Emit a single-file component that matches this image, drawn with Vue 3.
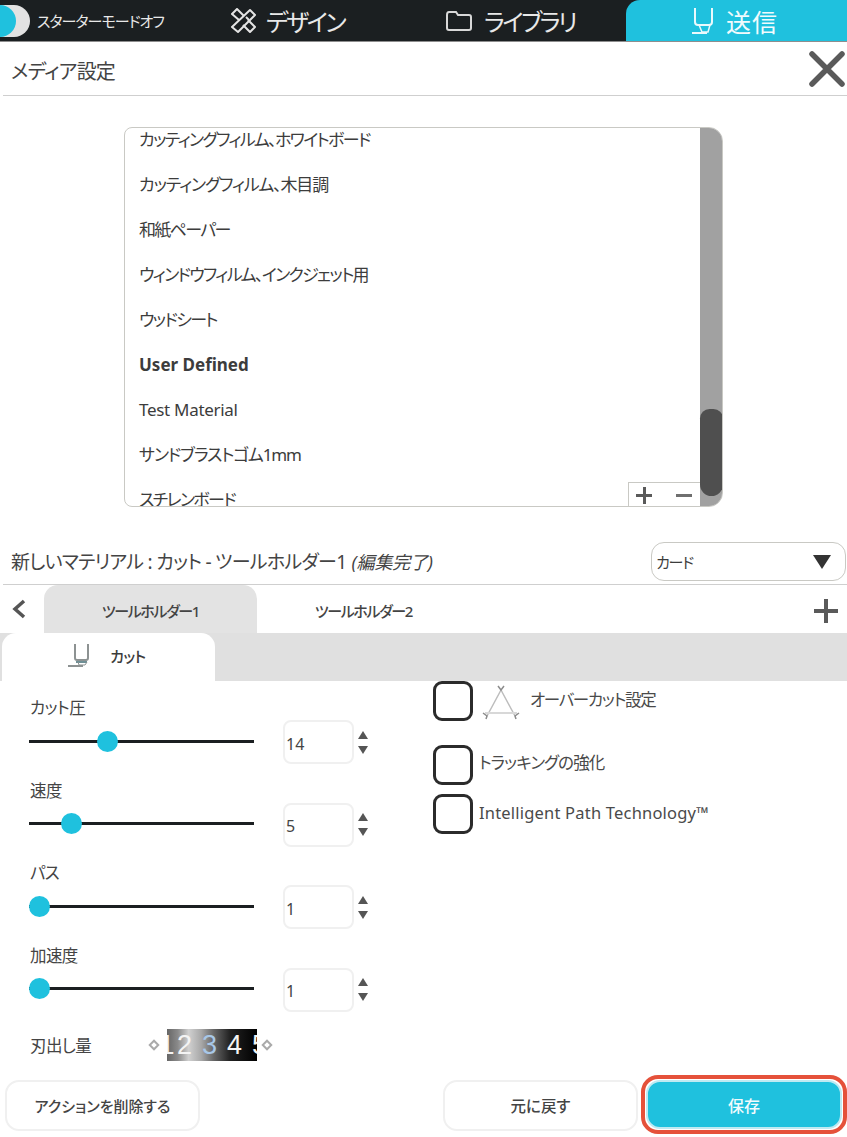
<script setup>
const materials = [
  { text: 'カッティングフィルム、ホワイトボード', tone: 'kana' },
  { text: 'カッティングフィルム、木目調', tone: 'mix' },
  { text: '和紙ペーパー', tone: 'kana' },
  { text: 'ウィンドウフィルム、インクジェット用', tone: 'kana' },
  { text: 'ウッドシート', tone: 'kana' },
  { text: 'User Defined', tone: 'bold' },
  { text: 'Test Material', tone: 'latin' },
  { text: 'サンドブラストゴム1mm', tone: 'mix' },
  { text: 'スチレンボード', tone: 'kana' }
]
const sliders = [
  { label: 'カット圧', value: 14, pos: 68 },
  { label: '速度', value: 5, pos: 32 },
  { label: 'パス', value: 1, pos: 0 },
  { label: '加速度', value: 1, pos: 0 }
]
</script>

<template>
  <div class="page">
    <header class="topbar">
      <div class="toggle"><span class="toggle-on"></span></div>
      <span class="mode">スターターモードオフ</span>
      <div class="nav nav-design">
        <svg width="27" height="26" viewBox="0 0 27 26" fill="none" stroke="#e4e4e4" stroke-width="2" stroke-linejoin="round"><path d="M20 2 L25 7 L8 24 L2 19 Z"/><path d="M9 12 L2 6 L7 1 L14 8"/><path d="M13 17 L20 24 L25 19 L18 12"/><path d="M16 9 L19 12"/></svg>
        <span>デザイン</span>
      </div>
      <div class="nav nav-lib">
        <svg width="28" height="22" viewBox="0 0 28 22" fill="none" stroke="#d8d8d8" stroke-width="2"><path d="M2 5 Q2 2 4 2 H11 L13 5 H24 Q26 5 26 7 V18 Q26 20 24 20 H4 Q2 20 2 18 Z"/></svg>
        <span>ライブラリ</span>
      </div>
      <div class="nav nav-send">
        <svg width="23" height="28" viewBox="0 0 23 28" fill="none" stroke="#e9f9fc" stroke-width="2"><path d="M4 1 V15 Q4 18 7 18 H18 Q21 18 21 15 V1"/><path d="M8 18 L11 25 H17 L19 18" stroke-width="1.500"/><path d="M1 26 H16"/></svg>
        <span>送信</span>
      </div>
    </header>

    <div class="title-row">
      <span class="title">メディア設定</span>
      <svg class="close" width="36" height="36" viewBox="0 0 36 36" stroke="#5a5a5a" stroke-width="5.500" stroke-linecap="round"><path d="M3 3 L33 33 M33 3 L3 33"/></svg>
    </div>

    <div class="list-wrap">
      <div class="list">
        <div class="list-inner">
          <div v-for="m in materials" :key="m.text" class="item" :class="m.tone">{{ m.text }}</div>
        </div>
        <div class="add-box">
          <span class="pm"><i class="h"></i><i class="v"></i></span>
          <span class="pm minus"><i class="h"></i></span>
        </div>
        <div class="scroll"><div class="thumb"></div></div>
      </div>
    </div>

    <div class="material-row">
      <span class="material">新しいマテリアル : カット - ツールホルダー1 <em>(編集完了)</em></span>
      <div class="select"><span>カード</span><svg width="20" height="16" viewBox="0 0 20 16"><path d="M1 1 H19 L10 15 Z" fill="#333"/></svg></div>
    </div>

    <div class="tabs">
      <svg class="chev" width="14" height="20" viewBox="0 0 14 20" fill="none" stroke="#555" stroke-width="3.500"><path d="M12 2 L3 10 L12 18"/></svg>
      <div class="tab active">ツールホルダー1</div>
      <div class="tab">ツールホルダー2</div>
      <span class="tab-plus"><i class="h"></i><i class="v"></i></span>
    </div>

    <div class="band">
      <div class="subtab">
        <svg width="25" height="25" viewBox="0 0 25 25" fill="none" stroke="#8d9292" stroke-width="2"><path d="M8 1 V15 Q8 17 10 17 H19 Q21 17 21 15 V1"/><path d="M9 19 H20" stroke="#6f8f95"/><path d="M11 19 L12 22 H18 L20 19" stroke-width="1"/><path d="M1 23 H16"/></svg>
        <span>カット</span>
      </div>
    </div>

    <div class="params">
      <div class="col-left">
        <div v-for="s in sliders" :key="s.label" class="param">
          <div class="param-label">{{ s.label }}</div>
          <div class="param-row">
            <div class="slider"><span class="knob" :style="{ left: s.pos + 'px' }"></span></div>
            <div class="num">{{ s.value }}</div>
            <div class="spin"><i class="up"></i><i class="down"></i></div>
          </div>
        </div>
        <div class="blade">
          <span class="blade-label">刃出し量</span>
          <i class="dia"></i>
          <div class="dial"><span>1</span><span>2</span><span class="blue">3</span><span>4</span><span>5</span></div>
          <i class="dia"></i>
        </div>
      </div>
      <div class="col-right">
        <div class="check check-1">
          <span class="box"></span>
          <svg class="tri" width="40" height="36" viewBox="0 0 40 36" fill="none" stroke="#bdbdbd" stroke-width="1.500"><path d="M20 6 L6 32 M20 6 L34 32"/><path d="M17 2 L20 6 L23 2 M2 29 L6 32 L5 35 M38 29 L34 32 L35 35" stroke="#8c8c8c"/><path d="M4 29 H36" stroke="#d8d8d8" stroke-width="2"/></svg>
          <span class="check-text over">オーバーカット設定</span>
        </div>
        <div class="check check-2"><span class="box"></span><span class="check-text track">トラッキングの強化</span></div>
        <div class="check check-3"><span class="box"></span><span class="check-text ipt">Intelligent Path Technology™</span></div>
      </div>
    </div>

    <div class="actions">
      <button class="btn btn-del">アクションを削除する</button>
      <div class="actions-right">
        <button class="btn btn-revert">元に戻す</button>
        <div class="save-ring"><button class="btn btn-save">保存</button></div>
      </div>
    </div>
  </div>
</template>

<style scoped>
.page { width: 847px; height: 1137px; overflow: hidden; background: #fff; color: #3c3c3c; font-family: "Noto Sans", "Noto Sans CJK JP", sans-serif; font-feature-settings: "palt"; }
.topbar { height: 41px; background: #1b1f21; border-bottom: 1px solid #8e8e8e; display: flex; align-items: center; color: #e8e8e8; }
.toggle { width: 30px; height: 32px; background: #e2e2e2; border-radius: 0 16px 16px 0; flex: none; overflow: hidden; }
.toggle-on { display: block; width: 16px; height: 32px; background: #1fc1de; border-radius: 0 16px 16px 0; }
.mode { font-size: 15px; margin-left: 7px; width: 192px; flex: none; letter-spacing: -0.95px; white-space: nowrap; }
.nav { display: flex; align-items: center; font-size: 24px; flex: none; letter-spacing: -2.4px; }
.nav-design { width: 215px; gap: 9px; margin-left: 1px; }
.nav-lib { width: 181px; gap: 11px; }
.nav-send { flex: 1; align-self: stretch; background: #1fc1de; border-radius: 14px 0 0 0; padding-left: 65px; gap: 12px; color: #f1fbfd; font-size: 25px; letter-spacing: 1px; }
.title-row { height: 53px; margin-left: 3px; border-bottom: 1px solid #cfcfcf; display: flex; align-items: center; justify-content: space-between; padding: 0 2px 0 8px; }
.title { font-size: 20px; color: #444; letter-spacing: -0.8px; margin-top: 4px; }
.list-wrap { padding: 31px 124px 0; }
.list { position: relative; height: 380px; width: 599px; box-sizing: border-box; border: 1px solid #c9c9c4; border-radius: 8px 14px 14px 8px; overflow: hidden; }
.list-inner { padding: 0 0 0 14px; margin-top: -11px; }
.item { height: 45px; line-height: 45px; font-size: 17px; color: #3c3c3c; white-space: nowrap; }
.item.kana { letter-spacing: -1.65px; }
.item.mix { letter-spacing: -1.15px; }
.item.latin { letter-spacing: -0.3px; }
.item.bold { font-weight: 700; }
.scroll { position: absolute; right: -1px; top: -1px; bottom: -1px; width: 23px; background: #a1a1a1; border-radius: 0 12px 12px 0; }
.thumb { position: absolute; left: 0; right: 0; top: 282px; height: 87px; background: #4f4f4f; border-radius: 10px 10px 12px 12px; }
.add-box { position: absolute; right: 22px; bottom: -1px; width: 72px; height: 25px; box-sizing: border-box; background: #fff; border: 1px solid #c9c9c4; border-right: 0; display: flex; align-items: center; justify-content: space-between; padding: 0 6px 0 5px; }
.pm, .tab-plus { position: relative; display: block; width: 20px; height: 20px; }
.pm .h, .tab-plus .h { position: absolute; left: 2px; right: 2px; top: 9px; height: 3px; background: #5a5a5a; }
.pm .v, .tab-plus .v { position: absolute; top: 2px; bottom: 1px; left: 9px; width: 3px; background: #5a5a5a; }
.minus .h { background: #6f6f6f; }
.material-row { margin-top: 35px; margin-left: 3px; height: 42px; border-bottom: 1px solid #cfcfcf; display: flex; align-items: flex-start; justify-content: space-between; padding-right: 1px; }
.material { font-size: 19px; margin: 5px 0 0 8px; color: #444; letter-spacing: -0.72px; white-space: nowrap; }
.material em { font-size: 18px; font-style: italic; margin-left: 1px; letter-spacing: -0.2px; }
.select { width: 195px; height: 39px; box-sizing: border-box; border: 1px solid #c9c9c4; border-radius: 13px; display: flex; align-items: center; justify-content: space-between; padding: 0 13px 0 4px; font-size: 15px; letter-spacing: -1.2px; }
.tabs { height: 48px; display: flex; align-items: stretch; position: relative; }
.chev { margin: 14px 18px 0 12px; flex: none; }
.tab { width: 213px; display: flex; align-items: center; justify-content: center; font-size: 15px; font-weight: 500; padding-top: 2px; box-sizing: border-box; color: #444; letter-spacing: -1.4px; }
.tab.active { background: #e3e3e3; border-radius: 14px 14px 0 0; }
.tab-plus { margin: 14px 9px 0 auto; width: 24px; height: 24px; }
.tab-plus .h { left: 0; right: 0; top: 10px; height: 4px; }
.tab-plus .v { left: 10px; top: 0; bottom: 0; width: 4px; }
.band { height: 48px; background: #e0e0e0; padding-left: 2px; }
.subtab { width: 213px; height: 48px; background: #fff; border-radius: 14px 14px 0 0; display: flex; align-items: center; padding: 0 0 3px 65px; gap: 18px; box-sizing: border-box; font-size: 15px; font-weight: 500; letter-spacing: -0.6px; }
.params { display: flex; height: 394px; }
.col-left { width: 433px; flex: none; padding: 15px 0 0 29px; box-sizing: border-box; }
.param { height: 82.500px; }
.param-label { font-size: 16.500px; line-height: 24px; color: #444; margin-left: 1px; letter-spacing: -0.6px; }
.param-row { display: flex; align-items: center; }
.slider { position: relative; width: 225px; height: 3px; background: #1b1f21; flex: none; margin-top: -2px; }
.knob { position: absolute; top: -9px; width: 21px; height: 21px; border-radius: 50%; background: #1fc1de; }
.num { width: 71px; height: 44px; box-sizing: border-box; margin-left: 29px; border: 2px solid #f0f0f0; border-radius: 8px; display: flex; align-items: center; padding: 3px 0 0 1px; font-size: 16px; color: #444; }
.spin { margin-left: 4px; display: flex; flex-direction: column; gap: 7px; }
.up { display: block; width: 0; height: 0; border: 5px solid transparent; border-top: 0; border-bottom: 8px solid #555; }
.down { display: block; width: 0; height: 0; border: 5px solid transparent; border-bottom: 0; border-top: 8px solid #555; }
.blade { display: flex; align-items: center; margin-top: 3px; height: 32px; }
.blade-label { width: 122px; font-size: 16.500px; color: #444; flex: none; margin: 0 0 0 1px; letter-spacing: -0.6px; }
.dia { display: block; width: 4px; height: 4px; background: #fff; border: 2px solid #aaa; transform: rotate(45deg); flex: none; margin-left: -2px; }
.dial { width: 90px; height: 32px; margin: 0 8px 0 9px; background: linear-gradient(90deg, #666 0%, #8a8a8a 12%, #d0d0d0 24%, #a8a8a8 38%, #666 52%, #222 70%, #000 100%); display: flex; overflow: hidden; font-size: 27px; line-height: 32px; color: #f4f4f4; flex: none; font-family: "Liberation Sans", sans-serif; }
.dial span { flex: none; width: 25px; text-align: center; }
.dial span:first-child { margin: 0 -5px 0 -10px; width: 20px; }
.dial .blue { color: #a8c8e8; }
.col-right { flex: 1; position: relative; }
.check { display: flex; align-items: center; }
.box { display: block; width: 40px; height: 40px; box-sizing: border-box; border: 3px solid #2b2b2b; border-radius: 9px; flex: none; }
.check-2 { margin-top: 24px; }
.check-3 { margin-top: 9px; }
.check-text { font-size: 16.500px; color: #4a4a4a; margin: -3px 0 0 6px; white-space: nowrap; }
.tri { margin-left: 8px; margin-top: 2px; }
.over { margin-left: 9px; margin-top: -4px; letter-spacing: -1.3px; }
.track { letter-spacing: -0.9px; margin-top: -6px; }
.ipt { letter-spacing: 0.2px; margin-top: -4px; }
.actions { height: 51px; display: flex; justify-content: space-between; padding: 5px 0 0 5px; align-items: flex-start; }
.actions-right { display: flex; align-items: flex-start; }
.btn { box-sizing: border-box; width: 195px; height: 51px; background: #fff; border: 2px solid #f0f0f0; border-radius: 14px; font: 500 15.500px "Noto Sans", "Noto Sans CJK JP", sans-serif; font-feature-settings: "palt"; color: #444; display: block; }
.btn-del { font-size: 15px; }
.btn-save { background: #1fc1de; border-color: #bfeaf2; color: #f2fbfd; width: 196px; height: 49px; font-size: 16px; }
.save-ring { margin: -5px 0 0 3px; padding: 1px; border: 4px solid #e5513a; border-radius: 17px; }
</style>
